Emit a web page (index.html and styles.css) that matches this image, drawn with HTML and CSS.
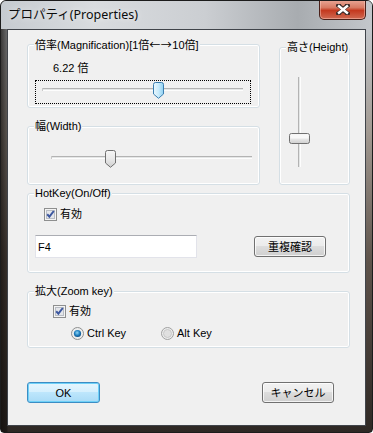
FILE: index.html
```html
<!DOCTYPE html>
<html lang="ja">
<head>
    <meta charset="UTF-8">
    <meta name="viewport" content="width=device-width, initial-scale=1.0">
    <title>プロパティ(Properties)</title>
    <link rel="stylesheet" href="styles.css">
</head>
<body>
    <div class="window">
        <div class="titlebar">
            <span class="title">プロパティ(Properties)</span>
            <button class="close" aria-label="閉じる">
                <svg width="14" height="11" viewBox="0 0 14 11">
                    <path d="M2 1.5 L7 4.6 L12 1.5 M2 9.5 L7 6.4 L12 9.5 M4 2.5 L10 8.5 M10 2.5 L4 8.5" stroke="#3b2a28" stroke-width="4" fill="none" stroke-linecap="square"/>
                    <path d="M3 2.3 L11 8.7 M11 2.3 L3 8.7" stroke="#fff" stroke-width="2.4" fill="none" stroke-linecap="square"/>
                </svg>
            </button>
        </div>

        <div class="client">
            <div class="top">
                <div class="left-col">
                    <fieldset class="group mag">
                        <legend>倍率(Magnification)[1倍<span class="arrows">←→</span>10倍]</legend>
                        <div class="value">6.22 倍</div>
                        <div class="focus">
                            <div class="hslider">
                                <div class="track"></div>
                                <svg class="thumb" style="left: 57.5%" width="11" height="17" viewBox="0 0 11 17">
                                    <defs>
                                        <linearGradient id="hot" x1="0" y1="0" x2="1" y2="0">
                                            <stop offset="0" stop-color="#eaf7fd"/>
                                            <stop offset="0.5" stop-color="#c9ebfb"/>
                                            <stop offset="1" stop-color="#8fd0f2"/>
                                        </linearGradient>
                                    </defs>
                                    <path d="M0.5 2.5 Q0.5 0.5 2.5 0.5 H8.5 Q10.5 0.5 10.5 2.5 V12 L5.5 16.3 L0.5 12 Z" fill="url(#hot)" stroke="#3c7fb1"/>
                                </svg>
                            </div>
                        </div>
                    </fieldset>

                    <fieldset class="group width">
                        <legend>幅(Width)</legend>
                        <div class="hslider wide">
                            <div class="track"></div>
                            <svg class="thumb" style="left: 29%" width="11" height="18" viewBox="0 0 11 18">
                                <defs>
                                    <linearGradient id="norm" x1="0" y1="0" x2="0" y2="1">
                                        <stop offset="0" stop-color="#f6f6f6"/>
                                        <stop offset="0.5" stop-color="#e9e9e9"/>
                                        <stop offset="1" stop-color="#cfcfcf"/>
                                    </linearGradient>
                                </defs>
                                <path d="M0.5 2.5 Q0.5 0.5 2.5 0.5 H8.5 Q10.5 0.5 10.5 2.5 V13 L5.5 17.3 L0.5 13 Z" fill="url(#norm)" stroke="#707070"/>
                            </svg>
                        </div>
                    </fieldset>
                </div>

                <fieldset class="group height">
                    <legend>高さ(Height)</legend>
                    <div class="vslider">
                        <div class="vtrack"></div>
                        <svg class="vthumb" style="top: 68%" width="21" height="11" viewBox="0 0 21 11">
                            <rect x="0.5" y="0.5" width="20" height="10" rx="2" fill="url(#norm)" stroke="#707070"/>
                            <rect x="1.5" y="1.5" width="18" height="4" fill="#f8f8f8"/>
                        </svg>
                    </div>
                </fieldset>
            </div>

            <fieldset class="group hotkey">
                <legend>HotKey(On/Off)</legend>
                <label class="check">
                    <svg class="box" width="13" height="13" viewBox="0 0 13 13">
                        <rect x="0.5" y="0.5" width="12" height="12" fill="#f4f4f4" stroke="#8e8f8f"/>
                        <rect x="2.5" y="2.5" width="8" height="8" fill="#e4e6ea" stroke="#b9bdc4"/>
                        <path d="M3.2 6.2 L5.4 8.6 L9.8 3" stroke="#3d58a0" stroke-width="2" fill="none"/>
                    </svg>
                    <span>有効</span>
                </label>
                <div class="key-row">
                    <div class="textbox">F4</div>
                    <button class="btn">重複確認</button>
                </div>
            </fieldset>

            <fieldset class="group zoomkey">
                <legend>拡大(Zoom key)</legend>
                <label class="check">
                    <svg class="box" width="13" height="13" viewBox="0 0 13 13">
                        <rect x="0.5" y="0.5" width="12" height="12" fill="#f4f4f4" stroke="#8e8f8f"/>
                        <rect x="2.5" y="2.5" width="8" height="8" fill="#e4e6ea" stroke="#b9bdc4"/>
                        <path d="M3.2 6.2 L5.4 8.6 L9.8 3" stroke="#3d58a0" stroke-width="2" fill="none"/>
                    </svg>
                    <span>有効</span>
                </label>
                <div class="radios">
                    <label class="radio">
                        <svg width="13" height="13" viewBox="0 0 13 13">
                            <defs>
                                <radialGradient id="dot" cx="0.45" cy="0.4" r="0.6">
                                    <stop offset="0" stop-color="#8fd6f6"/>
                                    <stop offset="0.6" stop-color="#1f7fc0"/>
                                    <stop offset="1" stop-color="#0d4f86"/>
                                </radialGradient>
                            </defs>
                            <circle cx="6.5" cy="6.5" r="6" fill="#eceded" stroke="#8e8f8f"/>
                            <circle cx="6.5" cy="6.5" r="3.6" fill="url(#dot)"/>
                        </svg>
                        <span>Ctrl Key</span>
                    </label>
                    <label class="radio">
                        <svg width="13" height="13" viewBox="0 0 13 13">
                            <circle cx="6.5" cy="6.5" r="6" fill="#eceded" stroke="#a0a0a0"/>
                            <circle cx="6.5" cy="6.5" r="4" fill="#e0e0e0" stroke="#c8c8c8"/>
                        </svg>
                        <span>Alt Key</span>
                    </label>
                </div>
            </fieldset>

            <div class="actions">
                <button class="btn default">OK</button>
                <button class="btn">キャンセル</button>
            </div>
        </div>
    </div>
</body>
</html>
```

FILE: styles.css
```css
body {
    margin: 0;
    background: #fff;
    font-family: "Liberation Sans", "Noto Sans CJK JP", sans-serif;
    font-size: 11px;
    line-height: 16px;
    color: #000;
}

.window {
    width: 373px;
    height: 433px;
    box-sizing: border-box;
    display: flex;
    flex-direction: column;
    padding: 0 6px 6px;
    border: 1px solid #1c1c1c;
    border-radius: 6px 6px 4px 4px;
    overflow: hidden;
    background:
        linear-gradient(to right, rgba(15, 12, 10, 0.75) 0, rgba(15, 12, 10, 0.5) 6px, transparent 7px),
        linear-gradient(to bottom, #cdd1d5 0, #c2c6ca 30px, #a29a92 130px, #5e534b 260px, #2e2824 100%);
}

.titlebar {
    height: 28px;
    flex-shrink: 0;
    margin: 0 -6px;
    padding: 0 6px 0 7px;
    display: flex;
    justify-content: space-between;
    align-items: flex-start;
    background: linear-gradient(to right, #c6cbd0 0, #d9dcdf 25%, #cbced2 55%, #a8acb0 80%, #c3c7cb 100%);
}

.title {
    margin-top: 6px;
    font-family: "Noto Sans", "Noto Sans CJK JP", sans-serif;
    font-size: 12.5px;
    color: #0c0c0c;
    text-shadow: 0 0 6px rgba(255, 255, 255, 0.8);
}

.close {
    width: 47px;
    height: 20px;
    margin-top: -1px;
    padding: 0;
    border: 1px solid #4a2019;
    border-top: none;
    border-radius: 0 0 5px 5px;
    background: linear-gradient(to bottom, #e9a797 0, #d77a63 40%, #c4391f 55%, #d06a52 100%);
    box-shadow: inset 0 0 0 1px rgba(255, 210, 200, 0.45);
    display: flex;
    align-items: center;
    justify-content: center;
}

.client {
    flex: 1;
    display: flex;
    flex-direction: column;
    padding: 6px 15px 0 19px;
    border: 1px solid #40444a;
    background: #f0f0f0;
}

.top {
    display: flex;
    gap: 19px;
}

.left-col {
    width: 233px;
    display: flex;
    flex-direction: column;
    gap: 10px;
}

.group {
    margin: 0;
    padding: 0 6px 3px;
    min-width: 0;
    border: 1px solid #d5dfe5;
    border-radius: 3px;
    box-shadow: inset 0 0 0 1px #fff;
}

.group legend {
    padding: 0 1px;
    line-height: 16px;
    white-space: nowrap;
    background: #f0f0f0;
}

.arrows {
    font-family: "Noto Sans CJK JP", sans-serif;
    letter-spacing: 0.5px;
}

.value {
    margin: 7px 0 0 19px;
}

.focus {
    width: 216px;
    height: 24px;
    box-sizing: border-box;
    margin: 4px 0 0 1px;
    border: 1px dotted #000;
}

.hslider {
    position: relative;
    width: 200px;
    height: 17px;
    margin: 1px 0 0 7px;
}

.hslider.wide {
    height: 18px;
    margin: 16px 0 13px 18px;
}

.track {
    position: absolute;
    left: 0;
    right: 0;
    top: 6px;
    height: 1px;
    border-top: 1px solid #b3b3b3;
    border-bottom: 1px solid #fdfdfd;
    background: #e4e6e6;
    box-shadow: -1px 0 0 #c8c8c8;
}

.thumb {
    position: absolute;
    top: 0;
    margin-left: -5px;
}

.height {
    width: 71px;
    height: 146px;
    box-sizing: border-box;
    margin-top: 3px;
    align-self: flex-start;
}

.vslider {
    position: relative;
    width: 21px;
    height: 90px;
    margin: 22px 0 0 3px;
}

.vtrack {
    position: absolute;
    left: 9px;
    top: 0;
    bottom: 0;
    width: 1px;
    border-left: 1px solid #b3b3b3;
    border-right: 1px solid #fdfdfd;
    background: #e4e6e6;
}

.vthumb {
    position: absolute;
    left: 0;
    margin-top: -5px;
}

.check {
    display: flex;
    align-items: center;
    gap: 3px;
}

.check .box {
    flex-shrink: 0;
}

.hotkey .check {
    margin: 5px 0 0 10px;
}

.key-row {
    display: flex;
    align-items: center;
    justify-content: space-between;
    margin: 13px 17px 11px 1px;
}

.textbox {
    width: 162px;
    height: 23px;
    box-sizing: border-box;
    padding: 3px 0 0 2px;
    border: 1px solid #e2e3ea;
    border-top-color: #abadb3;
    background: #fff;
}

.zoomkey {
    margin-top: 10px;
}

.zoomkey .check {
    margin: 4px 0 0 19px;
}

.radios {
    display: flex;
    margin: 6px 0 3px 37px;
}

.radio {
    width: 90px;
    display: flex;
    align-items: center;
    gap: 3px;
}

.btn {
    width: 72px;
    height: 21px;
    padding: 0;
    border: 1px solid #707070;
    border-radius: 3px;
    background: linear-gradient(to bottom, #f2f2f2 0, #ebebeb 50%, #dddddd 50%, #cfcfcf 100%);
    box-shadow: inset 0 0 0 1px rgba(255, 255, 255, 0.75);
    font-family: "Liberation Sans", "Noto Sans CJK JP", sans-serif;
    font-size: 11px;
    line-height: 16px;
    color: #000;
}

.btn.default {
    width: 73px;
    border-color: #3c8dc4;
    background: linear-gradient(to bottom, #e6f6fe 0, #d4effd 50%, #bde6fc 50%, #a9dbf6 100%);
    box-shadow: inset 0 0 0 1px #6fd1f8;
}

.actions {
    display: flex;
    justify-content: space-between;
    margin: 34px 16px 0 0;
}
```
